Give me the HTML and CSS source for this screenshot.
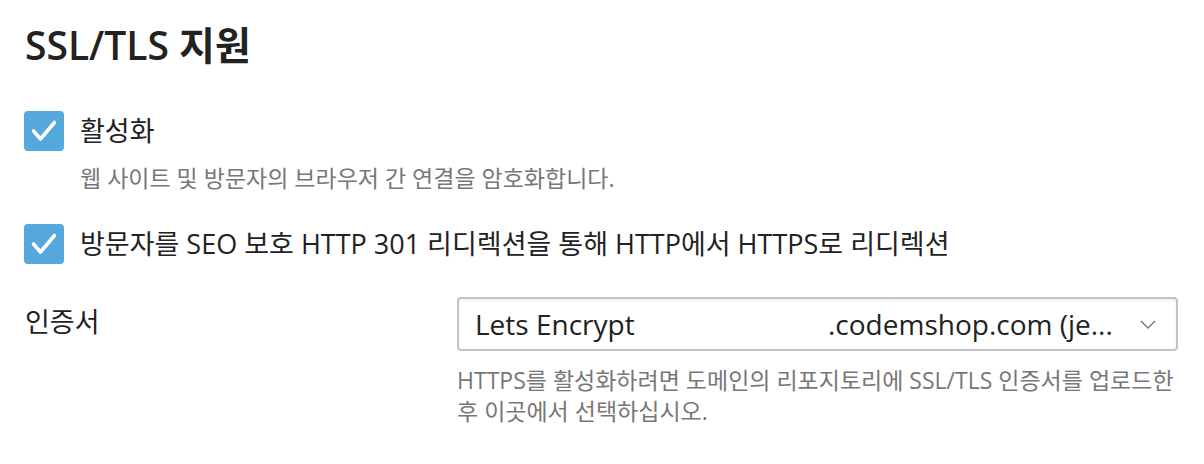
FILE: index.html
```html
<!DOCTYPE html>
<html lang="ko">
<head>
  <meta charset="UTF-8">
  <title>SSL/TLS 지원</title>
  <link rel="stylesheet" href="styles.css">
</head>
<body>
  <div class="panel">
    <h1>SSL/TLS 지원</h1>

    <div class="option">
      <label class="check">
        <span class="box">
          <svg viewBox="0 0 40 40" width="40" height="40"><path d="M9.5 20 L16.5 28 L30.5 11.5" fill="none" stroke="#fff" stroke-width="3.6" stroke-linecap="round" stroke-linejoin="round"/></svg>
        </span>
        <span class="check-label">활성화</span>
      </label>
      <p class="hint">웹 사이트 및 방문자의 브라우저 간 연결을 암호화합니다.</p>
    </div>

    <div class="option">
      <label class="check">
        <span class="box">
          <svg viewBox="0 0 40 40" width="40" height="40"><path d="M9.5 20 L16.5 28 L30.5 11.5" fill="none" stroke="#fff" stroke-width="3.6" stroke-linecap="round" stroke-linejoin="round"/></svg>
        </span>
        <span class="check-label">방문자를 SEO 보호 HTTP 301 리디렉션을 통해 HTTP에서 HTTPS로 리디렉션</span>
      </label>
    </div>

    <div class="field-row">
      <div class="field-label">인증서</div>
      <div class="field">
        <div class="select">
          <span class="select-provider">Lets Encrypt</span>
          <span class="select-domain">.codemshop.com (je...</span>
          <svg class="chevron" viewBox="0 0 16 9" width="16" height="9"><path d="M1 1 L8 8 L15 1" fill="none" stroke="#777" stroke-width="1.4"/></svg>
        </div>
        <p class="help">HTTPS를 활성화하려면 도메인의 리포지토리에 SSL/TLS 인증서를 업로드한 후 이곳에서 선택하십시오.</p>
      </div>
    </div>
  </div>
</body>
</html>
```

FILE: styles.css
```css
* { box-sizing: border-box; margin: 0; padding: 0; }
html, body {
  background: #fff;
  font-family: "Open Sans", "Noto Sans CJK KR", sans-serif;
  color: #222;
}

.panel {
  padding: 18px 26px 0 24px;
}

/* Heading */
.panel h1 {
  font-size: 39px;
  font-weight: 600;
  line-height: 54px;
  color: #222;
  margin-left: 1px;
  margin-bottom: 39px;
}

/* Checkbox options */
.check {
  display: flex;
  align-items: center;
  gap: 16px;
}
.box {
  width: 40px;
  height: 40px;
  border-radius: 4px;
  background: #55a8dc;
  flex: none;
  display: flex;
}
.check-label {
  font-size: 27px;
  line-height: 40px;
  color: #222;
}
.hint {
  margin-left: 56px;
  margin-top: 12px;
  font-size: 23px;
  line-height: 30px;
  color: #777;
}
.option + .option {
  margin-top: 31px;
}

/* Certificate row */
.field-row {
  display: flex;
  margin-top: 33px;
}
.field-label {
  width: 433px;
  flex: none;
  font-size: 27px;
  line-height: 50px;
  padding-left: 1px;
}
.field {
  width: 721px;
}
.select {
  height: 54px;
  border: 2px solid #c4c4c4;
  border-radius: 4px;
  box-shadow: inset 0 2px 3px rgba(0,0,0,0.06);
  display: flex;
  align-items: center;
  padding: 0 20px 0 16px;
  font-size: 28px;
  color: #222;
}
.select-provider {
  width: 353px;
  flex: none;
}
.select-domain {
  flex: 1;
  white-space: nowrap;
}
.chevron {
  flex: none;
}
.help {
  margin-top: 14px;
  font-size: 23px;
  line-height: 31px;
  color: #777;
}
```
